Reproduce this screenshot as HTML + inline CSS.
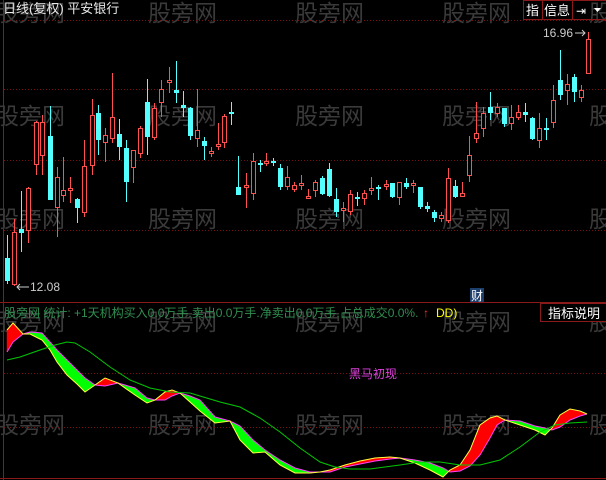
<!DOCTYPE html>
<html><head><meta charset="utf-8"><style>
html,body{margin:0;padding:0;background:#000;width:606px;height:480px;overflow:hidden}
svg{display:block}
text{font-family:"Liberation Sans","Noto Sans CJK SC",sans-serif}
</style></head><body>
<svg id="s" width="606" height="480" viewBox="0 0 606 480" xmlns="http://www.w3.org/2000/svg">
<rect width="606" height="480" fill="#000"/>
<g fill="#3a3a3a" font-size="23" font-family="'Noto Sans CJK SC',sans-serif">
<text x="-4" y="21">股旁网</text><text x="148" y="21">股旁网</text><text x="295" y="21">股旁网</text><text x="442" y="21">股旁网</text><text x="589" y="21">股旁网</text>
<text x="-4" y="124">股旁网</text><text x="148" y="124">股旁网</text><text x="295" y="124">股旁网</text><text x="442" y="124">股旁网</text><text x="589" y="124">股旁网</text>
<text x="-4" y="227">股旁网</text><text x="148" y="227">股旁网</text><text x="295" y="227">股旁网</text><text x="442" y="227">股旁网</text><text x="589" y="227">股旁网</text>
<text x="-4" y="330">股旁网</text><text x="148" y="330">股旁网</text><text x="295" y="330">股旁网</text><text x="442" y="330">股旁网</text><text x="589" y="330">股旁网</text>
<text x="-4" y="433">股旁网</text><text x="148" y="433">股旁网</text><text x="295" y="433">股旁网</text><text x="442" y="433">股旁网</text><text x="589" y="433">股旁网</text>
</g>
<g stroke="#7a1010" stroke-width="1" stroke-dasharray="1,2">
<line x1="4" y1="20.5" x2="606" y2="20.5"/><line x1="4" y1="89.5" x2="606" y2="89.5"/><line x1="4" y1="160.5" x2="606" y2="160.5"/><line x1="4" y1="230.5" x2="606" y2="230.5"/>
<line x1="4" y1="373.5" x2="606" y2="373.5"/><line x1="4" y1="427.5" x2="606" y2="427.5"/>
</g>
<line x1="3.5" y1="0" x2="3.5" y2="480" stroke="#8a1a1a"/>
<line x1="0" y1="302.5" x2="606" y2="302.5" stroke="#8a1a1a"/>
<line x1="0" y1="478.5" x2="606" y2="478.5" stroke="#8a1a1a"/>
<g id="c"></g>
<g id="l"></g>
<text x="3" y="13" fill="#e8e8e8" font-size="13">日线(复权) 平安银行</text>
<g stroke="#8a1a1a" fill="none"><rect x="523.5" y="0.5" width="19" height="19"/><rect x="542.5" y="0.5" width="30" height="19"/><rect x="572.5" y="0.5" width="34" height="19"/></g>
<text x="526" y="15" fill="#fff" font-size="13">指</text>
<text x="544" y="15" fill="#fff" font-size="13">信息</text>
<text x="576" y="15" fill="#fff" font-size="12">⇥</text>
<path d="M594 8 L601 8 L597.5 12 Z" fill="#fff"/>
<text x="543" y="37" fill="#ccc" font-size="12">16.96</text>
<path d="M575 33 H585 M582 30 L585 33 L582 36" stroke="#ccc" fill="none"/>
<path d="M17 287 H29 M20 284 L17 287 L20 290" stroke="#ccc" fill="none"/>
<text x="30" y="291" fill="#ccc" font-size="12">12.08</text>
<rect x="470" y="288" width="14" height="14" fill="#1c3f6e"/>
<text x="471" y="300" fill="#fff" font-size="12">财</text>
<text x="4" y="317" fill="#2f8f50" font-size="12">股旁网 统计: +1天机构买入0.0万手.卖出0.0万手.净卖出0.0万手.占总成交0.0%.</text>
<text x="423" y="317" fill="#ff3030" font-size="12">↑</text>
<text x="436" y="317" fill="#ffff00" font-size="12">DD)</text>
<rect x="540.5" y="303.5" width="66" height="18" fill="#000" stroke="#8a1a1a"/>
<text x="548" y="318" fill="#fff" font-size="13">指标说明</text>
<text x="349" y="378" fill="#e040e0" font-size="12">黑马初现</text>
</svg>
<script>
var C=[
[7,'c',258,281,235,284],[14,'r',232,284,219,286],[21,'c',229,233,191,252],[28,'r',188,230,187,243],
[36,'r',122,164,121,175],[42,'r',122,155,115,175],[50,'c',136,200,106,200],[57,'r',177,207,167,237],
[63,'r',190,195,157,202],[70,'r',188,190,177,203],[77,'c',199,208,198,223],[84,'r',166,212,140,217],
[92,'r',115,165,99,175],[98,'c',113,140,105,155],[105,'r',135,142,128,162],[112,'r',117,138,73,143],
[119,'c',134,147,119,160],[126,'c',148,182,140,202],[133,'r',150,167,150,183],[140,'r',128,153,126,158],
[147,'c',102,137,79,155],[154,'r',108,137,103,140],[161,'r',89,102,80,117],[169,'r',80,82,67,93],
[176,'c',90,93,61,103],[183,'c',105,108,91,117],[190,'c',108,136,107,140],[197,'r',130,138,89,147],
[204,'c',141,146,137,160],[211,'r',151,153,147,157],[218,'r',144,146,123,150],[224,'r',116,142,114,148],
[231,'c',112,114,102,125],[238,'c',187,195,156,195],[246,'r',185,187,173,208],[253,'r',161,193,153,200],
[260,'c',163,165,160,172],[266,'r',161,163,153,166],[273,'c',161,163,158,166],[280,'c',168,187,164,190],
[287,'r',177,186,166,190],[294,'r',185,189,182,192],[301,'r',183,185,175,190],[308,'r',196,198,189,199],
[315,'r',182,190,180,197],[322,'c',178,194,176,195],[329,'c',169,196,163,197],[336,'c',199,212,188,217],
[343,'r',208,210,202,222],[350,'r',194,211,190,215],[357,'c',197,199,192,206],[364,'r',193,198,190,205],
[371,'r',188,190,177,195],[378,'c',187,189,185,200],[386,'r',184,186,180,190],[392,'c',183,197,183,198],
[399,'r',182,197,182,205],[406,'c',183,187,178,189],[413,'r',183,185,180,193],[420,'c',187,207,187,209],
[427,'c',206,209,202,212],[434,'c',212,218,210,222],[441,'r',215,218,212,222],[448,'r',178,220,168,223],
[455,'c',186,197,180,198],[462,'r',193,196,182,197],[469,'r',155,175,136,182],[476,'r',133,138,102,143],
[483,'r',113,128,107,137],[490,'c',107,113,92,120],[497,'r',107,113,103,117],[504,'c',108,124,108,127],
[511,'r',117,123,105,130],[518,'r',112,117,105,120],[525,'c',112,115,103,122],[532,'c',118,139,117,140],
[539,'r',128,140,113,148],[546,'c',128,130,118,140],[553,'r',100,122,85,128],[560,'c',80,95,50,100],
[567,'r',84,90,74,105],[574,'c',77,92,74,102],[581,'r',90,97,85,102],[588,'r',39,73,32,73]];
var g=document.getElementById('c'),h='';
C.forEach(function(k){var x=k[0],col=k[1]=='c'?'#54ffff':'#ff5050';
h+='<line x1="'+(x+.5)+'" y1="'+k[4]+'" x2="'+(x+.5)+'" y2="'+k[5]+'" stroke="'+col+'"/>';
var hh=Math.max(1,k[3]-k[2]);
if(k[1]=='c')h+='<rect x="'+(x-2)+'" y="'+k[2]+'" width="5" height="'+hh+'" fill="'+col+'"/>';
else h+='<rect x="'+(x-1.5)+'" y="'+(k[2]+.5)+'" width="4" height="'+hh+'" fill="#000" stroke="'+col+'"/>';});
g.innerHTML=h;
var P=[[7,330,352],[13,323,342],[23,334,334],[30,334,332],[42,340,333],[50,350,342],[57,362,350],[67,375,360],[77,384,370],[85,392,378],[95,385,385],[105,378,386],[118,383,383],[125,388,385],[135,395,388],[147,403,398],[155,400,400],[165,392,400],[172,390,396],[180,393,393],[190,402,396],[200,411,400],[215,423,417],[230,421,421],[240,440,426],[253,453,440],[265,452,450],[280,465,460],[295,473,468],[310,473,472],[320,472,472],[330,470,472],[345,465,467],[360,461,464],[375,458,461],[390,457,459],[400,458,458],[415,463,460],[430,470,463],[443,477,468],[450,470,472],[460,465,471],[470,450,466],[480,425,455],[490,418,438],[497,416,425],[505,420,420],[520,425,421],[535,430,426],[545,435,428],[552,428,430],[560,415,427],[570,409,420],[580,411,416],[587,414,414]];
var l=document.getElementById('l'),s='';
for(var i=0;i<P.length-1;i++){var a=P[i],b=P[i+1];var red=(a[1]+b[1])<(a[2]+b[2]);
s+='<polygon points="'+a[0]+','+a[1]+' '+b[0]+','+b[1]+' '+b[0]+','+b[2]+' '+a[0]+','+a[2]+'" fill="'+(red?'#ff0000':'#00ff00')+'" stroke="'+(red?'#ff0000':'#00ff00')+'" stroke-width="0.5"/>';}
var pa='',pm='';P.forEach(function(p,i){pa+=(i?'L':'M')+p[0]+' '+p[1];pm+=(i?'L':'M')+p[0]+' '+p[2];});
s+='<path d="'+pm+'" stroke="#ff40ff" fill="none"/><path d="'+pa+'" stroke="#ffff40" fill="none"/>';
s+='<path d="M7 360 L20 357 L40 350 L55 345 L67 342 L75 343 L90 352 L110 367 L130 380 L150 388 L170 392 L190 393 L200 396 L220 402 L240 407 L260 418 L280 432 L300 448 L320 462 L335 467 L350 469 L370 469 L400 465 L420 462 L440 462 L460 465 L480 465 L500 460 L520 447 L540 432 L555 425 L570 423 L587 422" stroke="#00c800" fill="none"/>';
l.innerHTML=s;
</script>
</body></html>
